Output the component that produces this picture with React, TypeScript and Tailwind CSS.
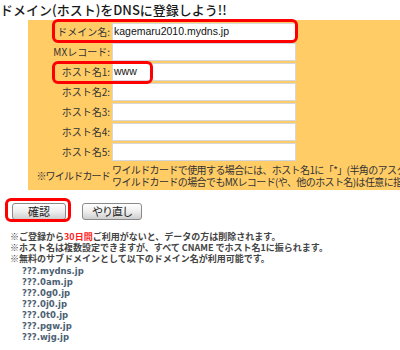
import React from "react";

const jp = { fontFamily: '"Noto Sans CJK JP", "Noto Sans", sans-serif' };

const rows = [
  { label: "ドメイン名:", value: "kagemaru2010.mydns.jp" },
  { label: "MXレコード:", value: "" },
  { label: "ホスト名1:", value: "www" },
  { label: "ホスト名2:", value: "" },
  { label: "ホスト名3:", value: "" },
  { label: "ホスト名4:", value: "" },
  { label: "ホスト名5:", value: "" },
];

const domains = ["???.mydns.jp", "???.0am.jp", "???.0g0.jp", "???.0j0.jp", "???.0t0.jp", "???.pgw.jp", "???.wjg.jp"];

function Button({ children }: { children: React.ReactNode }) {
  return (
    <button className="h-[17px] rounded-[3px] border border-[#8a8a8a] bg-gradient-to-b from-white via-[#eeeeee] to-[#cfcfcf] text-[11px] leading-none text-[#222]">
      {children}
    </button>
  );
}

export default function App() {
  return (
    <div className="relative w-[400px] h-[350px] overflow-hidden bg-white" style={jp}>
      {/* タイトル */}
      <div className="h-[20px] pt-[1px] text-[13px] leading-[17px] font-medium text-[#1a1a1a] whitespace-nowrap">
        ドメイン(ホスト)をDNSに登録しよう!!
      </div>

      {/* 入力フォーム */}
      <div className="ml-[28px] w-[372px] bg-[#ffcc66] pt-[3px] pb-[1px]">
        <div className="flex flex-col gap-[2px]">
          {rows.map((r) => (
            <div key={r.label} className="flex items-center h-[18px]">
              <div className="w-[84px] pr-[2px] text-right text-[10px] leading-none text-[#333] whitespace-nowrap">
                {r.label}
              </div>
              <div className="w-[184px] h-[18px] bg-white border border-[#d4d8dc] flex items-center px-[1px] text-[10.5px] text-[#111]" style={{ fontFamily: '"Liberation Sans", Arial, sans-serif' }}>
                {r.value}
              </div>
            </div>
          ))}
          <div className="flex items-center h-[26px]">
            <div className="w-[84px] pr-[2px] text-right text-[10px] leading-none text-[#333] whitespace-nowrap tracking-[-0.8px]">
              ※ワイルドカード
            </div>
            <div className="flex-1 overflow-hidden text-[10px] leading-[12px] text-[#333] whitespace-nowrap tracking-[-0.6px]">
              <div>ワイルドカードで使用する場合には、ホスト名1に「*」(半角のアスタ</div>
              <div>ワイルドカードの場合でもMXレコード(や、他のホスト名)は任意に指</div>
            </div>
          </div>
        </div>
      </div>

      {/* ボタン */}
      <div className="flex gap-[16px] pl-[12px] pt-[13px]">
        <div className="w-[54px] flex"><Button><span className="px-[15px]">確認</span></Button></div>
        <div className="w-[68px] flex"><Button><span className="px-[9px] tracking-[-1px]">やり直し</span></Button></div>
      </div>

      {/* 注意書き */}
      <div className="pl-[10px] pt-[11px] text-[9px] leading-[11px] font-bold text-[#444] whitespace-nowrap">
        <div>※ご登録から<span className="text-[#ff2020]">30日間</span>ご利用がないと、データの方は削除されます。</div>
        <div>※ホスト名は複数設定できますが、すべて CNAME でホスト名1に振られます。</div>
        <div>※無料のサブドメインとして以下のドメイン名が利用可能です。</div>
      </div>
      <div className="pl-[22px] pt-[2px] text-[8.5px] leading-[11px] font-bold text-[#4d5f73]" style={{ fontFamily: '"DejaVu Sans", Verdana, sans-serif' }}>
        {domains.map((d) => (
          <div key={d}>{d}</div>
        ))}
      </div>

      {/* 赤い強調枠 */}
      <div className="absolute left-[52px] top-[19px] w-[246px] h-[24px] rounded-[6px] border-[3px] border-[#ff0000]" />
      <div className="absolute left-[52px] top-[61px] w-[101px] h-[23px] rounded-[6px] border-[3px] border-[#ff0000]" />
      <div className="absolute left-[5px] top-[198px] w-[66px] h-[24px] rounded-[6px] border-[3px] border-[#ff0000]" />
    </div>
  );
}
